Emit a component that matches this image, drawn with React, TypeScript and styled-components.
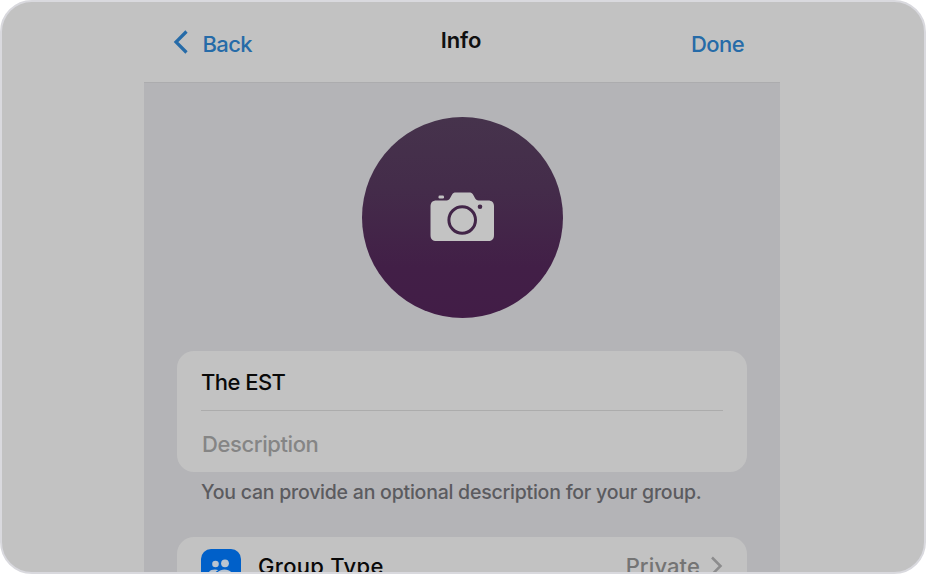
import React from 'react';
import styled, { createGlobalStyle } from 'styled-components';

const GlobalStyle = createGlobalStyle`
  *, *::before, *::after { box-sizing: border-box; }
  body { margin: 0; background: #fff; font-family: Inter, "Liberation Sans", sans-serif; }
`;

const Frame = styled.main`
  width: 926px;
  height: 574px;
  padding: 0 142px;
  border: 2px solid #d9d9de;
  border-radius: 32px;
  background: #c2c2c2;
  overflow: hidden;
`;

const Panel = styled.section`
  width: 636px;
  height: 100%;
  display: flex;
  flex-direction: column;
`;

const Header = styled.header`
  flex: none;
  height: 80px;
  display: grid;
  grid-template-columns: 1fr auto 1fr;
  align-items: start;
  padding: 0 36px 0 29px;
`;

const NavButton = styled.button<{ $end?: boolean }>`
  justify-self: ${p => (p.$end ? 'end' : 'start')};
  display: flex;
  align-items: flex-start;
  gap: 12.5px;
  margin: 28px 0 0;
  padding: 0;
  border: 0;
  background: none;
  color: #266ba8;
  font: 450 22px/28px Inter, sans-serif;
  letter-spacing: -0.6px;
`;

const Title = styled.h1`
  margin: 24px 0 0 5px;
  color: #101010;
  font-size: 22px;
  font-weight: 600;
  line-height: 28px;
  letter-spacing: -0.1px;
`;

const Content = styled.div`
  flex: 1;
  min-height: 0;
  padding: 34px 33px 0;
  border-top: 1px solid #acacae;
  background: #b4b4b7;
  overflow: hidden;
`;

const Avatar = styled.div`
  width: 201px;
  height: 201px;
  margin: 0 auto 33px;
  display: flex;
  align-items: center;
  justify-content: center;
  border-radius: 50%;
  background: linear-gradient(#46334c, #442c4a 35%, #421f47 75%, #421d47);
`;

const Card = styled.div`
  border-radius: 17px;
  background: #c2c2c2;
  padding: 0 24px;
`;

const Field = styled.div<{ $muted?: boolean }>`
  height: ${p => (p.$muted ? 61 : 60)}px;
  padding: ${p => (p.$muted ? '19px 0 0 1px' : '17px 0 0')};
  border-bottom: ${p => (p.$muted ? '0' : '1px solid #acacac')};
  color: ${p => (p.$muted ? '#858585' : '#090909')};
  font-size: 22px;
  font-weight: 450;
  letter-spacing: ${p => (p.$muted ? '-0.4px' : '-0.55px')};
  line-height: 28px;
`;

const Hint = styled.p`
  margin: 7px 0 32px 24px;
  color: #5b5b5f;
  font-size: 19.5px;
  font-weight: 450;
  letter-spacing: -0.23px;
  line-height: 26px;
  white-space: nowrap;
`;

const TypeRow = styled.div`
  height: 64px;
  display: flex;
  align-items: flex-start;
  padding-top: 12px;
`;

const IconTile = styled.div`
  width: 40px;
  height: 40px;
  border-radius: 10px;
  background: #0060c9;
`;

const Label = styled.span`
  margin: 3px 0 0 17px;
  color: #090909;
  font-size: 22px;
  font-weight: 450;
  letter-spacing: 0.3px;
  line-height: 28px;
`;

const Value = styled(Label)`
  margin-left: auto;
  margin-right: 10px;
  letter-spacing: 0.1px;
  color: #747474;
`;

const Glyph = styled.svg<{ $top?: number }>`
  display: block;
  flex: none;
  margin-top: ${p => p.$top ?? 0}px;
`;

export default function App() {
  return (
    <>
      <GlobalStyle />
      <Frame>
        <Panel>
          <Header>
            <NavButton>
              <Glyph width="17" height="24" viewBox="0 0 17 24" fill="none">
                <path d="M13.5 1.5 3 12l10.5 10.5" stroke="currentColor" strokeWidth="3.2" />
              </Glyph>
              Back
            </NavButton>
            <Title>Info</Title>
            <NavButton $end>Done</NavButton>
          </Header>
          <Content>
            <Avatar>
              <Glyph $top={-2} width="64" height="49" viewBox="0 0 64 49">
                <path fill="#c3c3c3" d="M6.5 8.5h10c1.8 0 2.8-1 3.8-2.8l1.5-2.8C22.8 1 24 .5 26 .5h13c2 0 3.3.5 4.3 2.4l1.5 2.8c1 1.8 2 2.8 3.8 2.8H58c4 0 6 2 6 6v28.5c0 4-2 6-6 6H6.5c-4 0-6-2-6-6v-28.5c0-4 2-6 6-6Z" />
                <rect x="8.5" y="3.5" width="5.5" height="3" rx="1.2" fill="#c3c3c3" />
                <circle cx="32.2" cy="28" r="13.3" fill="none" stroke="#422548" strokeWidth="3" />
                <circle cx="50" cy="14.8" r="2.3" fill="#432849" />
              </Glyph>
            </Avatar>
            <Card>
              <Field>The EST</Field>
              <Field $muted>Description</Field>
            </Card>
            <Hint>You can provide an optional description for your group.</Hint>
            <Card>
              <TypeRow>
                <IconTile>
                  <Glyph width="40" height="40" viewBox="0 0 40 40" fill="#b9c4d0">
                    <circle cx="14.5" cy="15" r="3.3" />
                    <circle cx="24" cy="14.3" r="3.9" />
                    <path d="M7 27c0-5 3-6.5 7-6.5 1.4 0 2.4.3 3.2.8C14.5 22.4 13 25 13 28H7Z" />
                    <path d="M14.5 29c0-5.5 4-8.5 9-8.5s9 3 9 8.5c0 2-18 2-18 0Z" />
                  </Glyph>
                </IconTile>
                <Label>Group Type</Label>
                <Value>Private</Value>
                <Glyph $top={6} width="13" height="22" viewBox="0 0 13 22" fill="none">
                  <path d="M2 2.5 10.5 11 2 19.5" stroke="#8c8c8d" strokeWidth="2.5" />
                </Glyph>
              </TypeRow>
            </Card>
          </Content>
        </Panel>
      </Frame>
    </>
  );
}
